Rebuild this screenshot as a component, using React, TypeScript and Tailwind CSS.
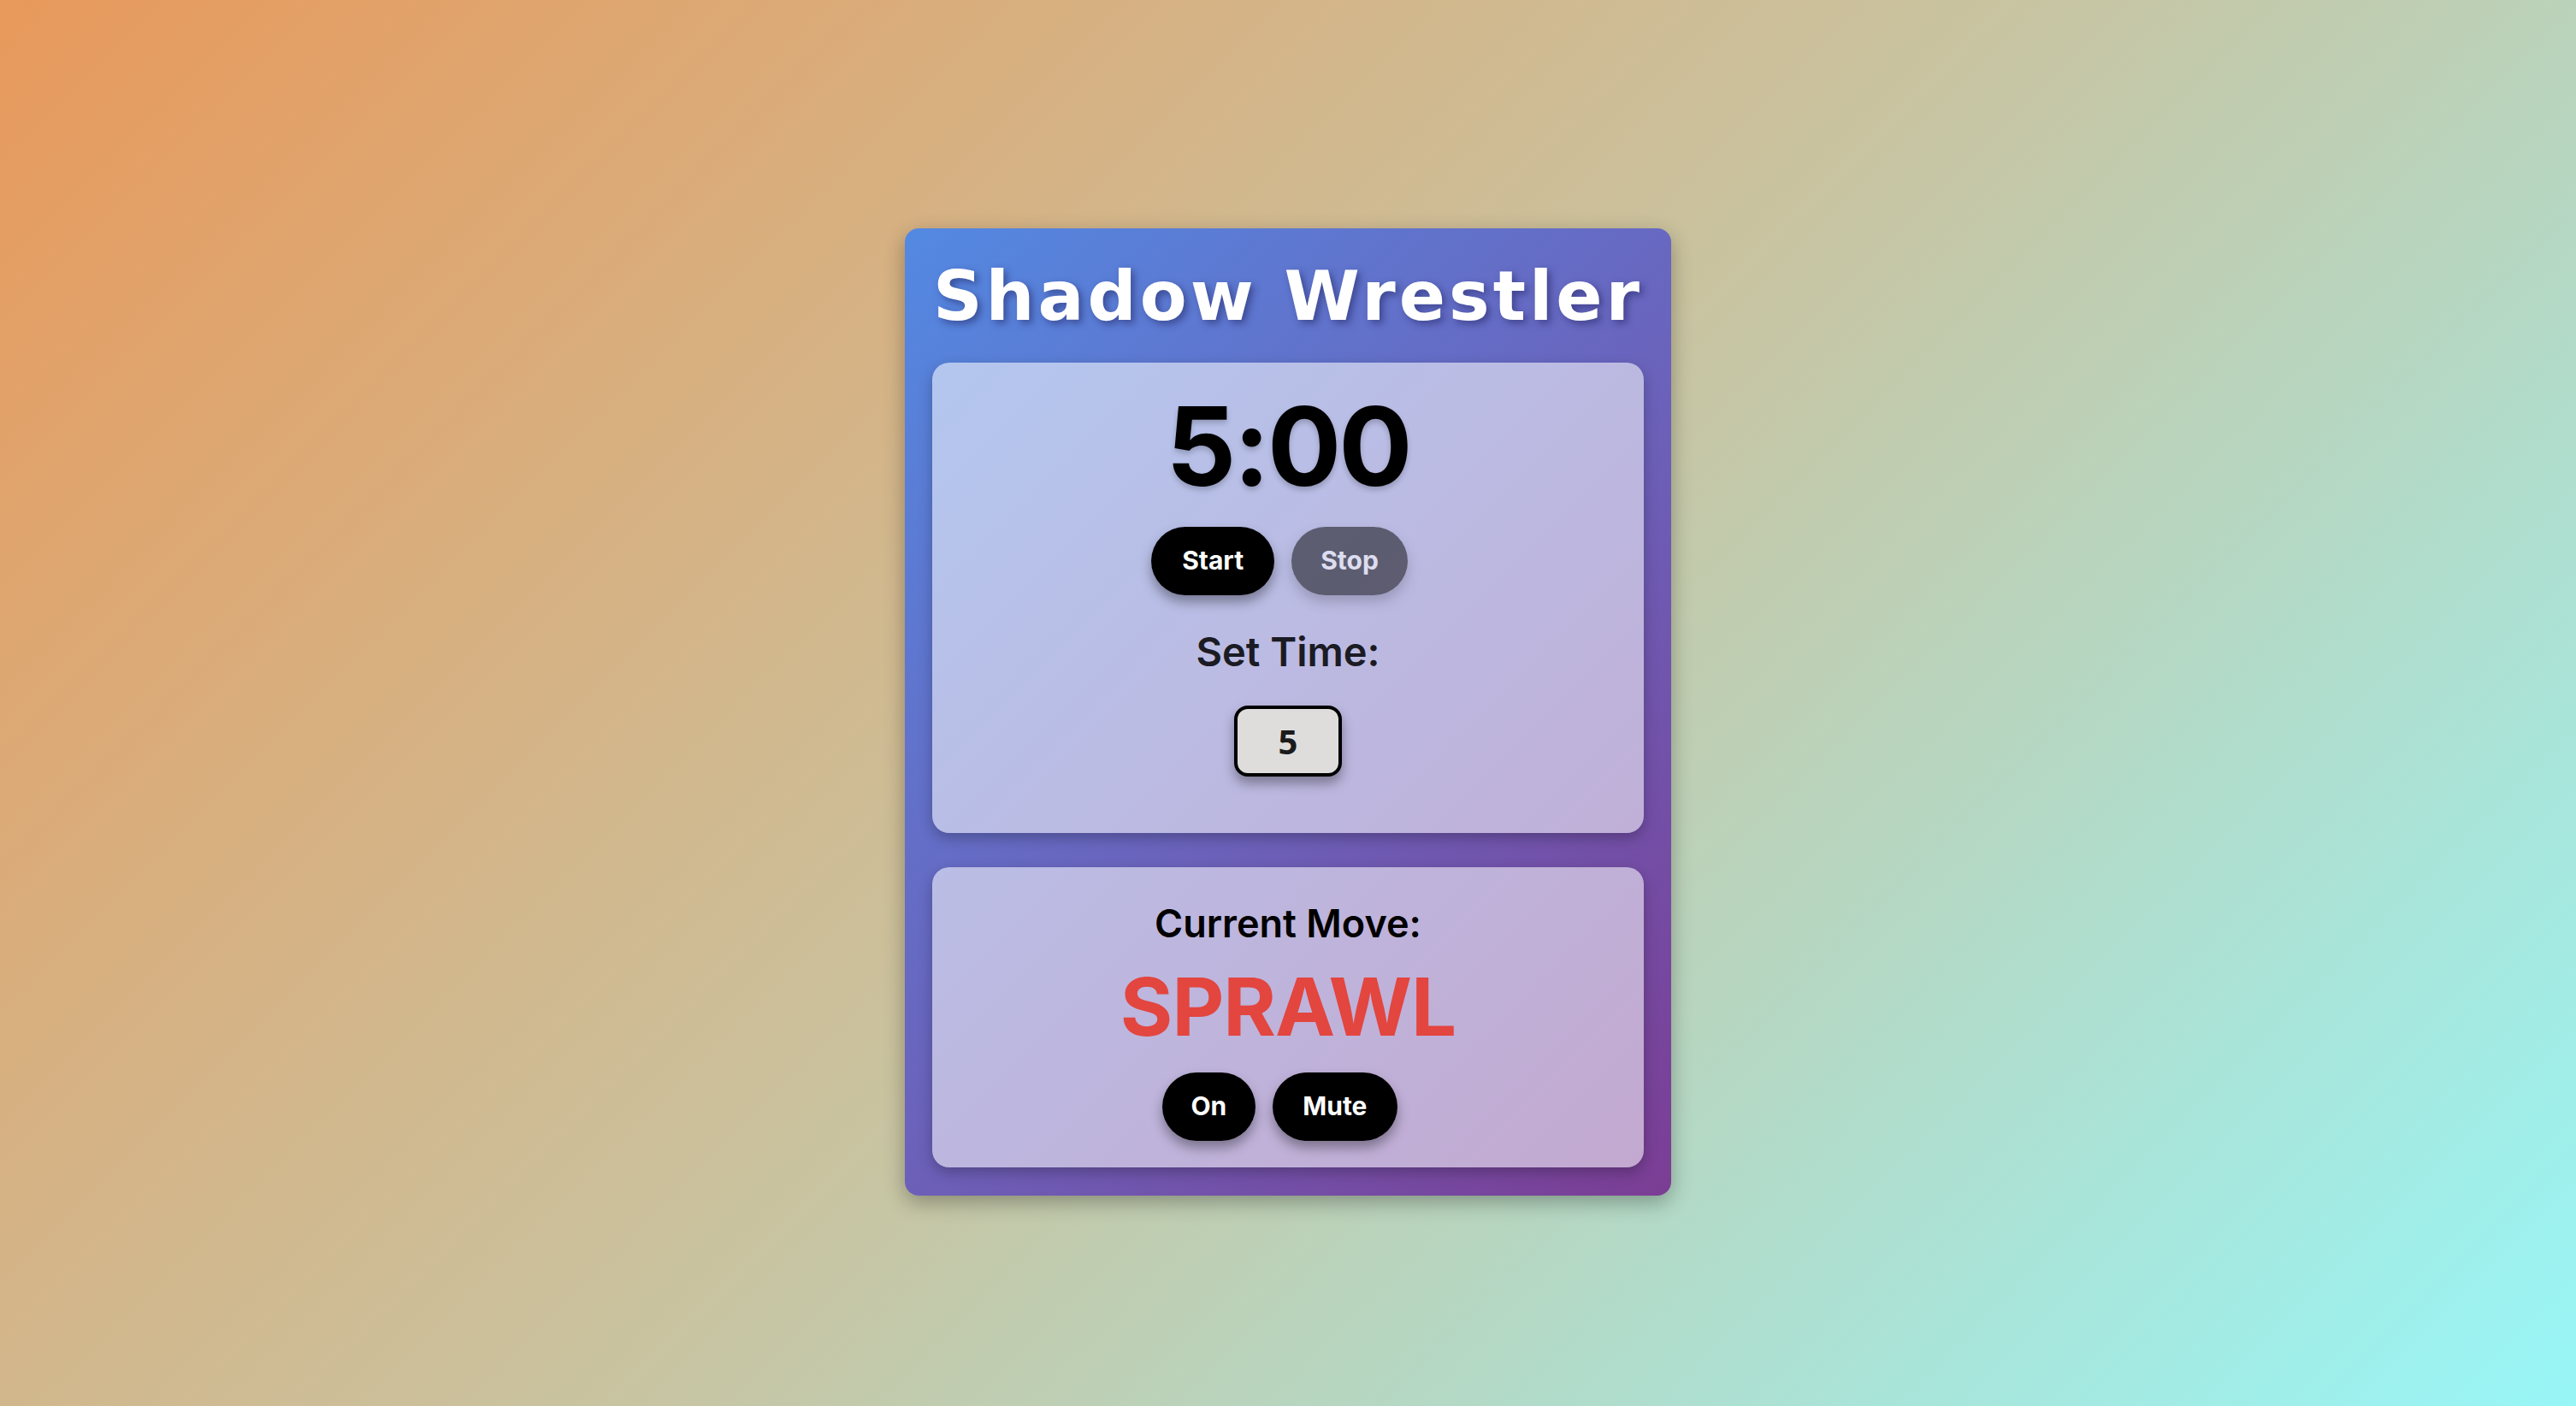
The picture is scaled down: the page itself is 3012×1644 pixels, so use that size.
export default function App() {
  return (
    <main className="min-h-screen w-full flex items-center justify-center pt-[20px] bg-[linear-gradient(135deg,#e8995b_0%,#c9c3a0_50%,#98f6f7_100%)] font-['Inter',sans-serif]">
      <div className="w-[896px] rounded-[16px] bg-[linear-gradient(135deg,#5389e2_0%,#6a64bd_50%,#7b3d94_100%)] px-[32px] pt-[32px] pb-[33px] shadow-[0_8px_24px_rgba(0,0,0,0.3)]">
        <h1 className="text-center text-white font-['DejaVu_Sans',sans-serif] font-bold text-[80px] leading-[96px] tracking-[4px] mb-[29px] [text-shadow:4px_4px_8px_rgba(30,30,90,0.5)]">
          Shadow Wrestler
        </h1>

        <section className="flex flex-col items-center rounded-[20px] bg-white/55 pt-[34px] pb-[66px] shadow-[0_6px_16px_rgba(0,0,0,0.25)]">
          <div className="text-[128px] leading-none font-bold text-black tracking-[-3px] [text-shadow:0_4px_6px_rgba(0,0,0,0.2)]">
            5:00
          </div>
          <div className="flex mt-[30px]">
            <button className="h-[80px] px-[36px] mr-[20px] rounded-full bg-black text-white text-[30px] font-bold shadow-[0_8px_14px_rgba(0,0,0,0.35)]">
              Start
            </button>
            <button
              disabled
              className="h-[80px] px-[34px] mr-[20px] rounded-full bg-black text-white text-[30px] font-bold opacity-50 shadow-[0_8px_14px_rgba(0,0,0,0.35)]"
            >
              Stop
            </button>
          </div>
          <h2 className="mt-[37px] text-[47px] leading-[58px] font-semibold text-[#1b1b24]">
            Set Time:
          </h2>
          <input
            type="text"
            defaultValue="5"
            className="mt-[34px] w-[126px] h-[83px] rounded-[16px] border-[4px] border-black bg-[#dedddb] text-center text-[40px] font-bold text-[#1b1b1b] font-['Noto_Sans',sans-serif] shadow-[0_8px_14px_rgba(0,0,0,0.35)] outline-none"
          />
        </section>

        <section className="mt-[40px] flex flex-col items-center rounded-[20px] bg-white/55 pt-[40px] pb-[31px] shadow-[0_6px_16px_rgba(0,0,0,0.25)]">
          <h2 className="text-[45px] leading-[52px] font-semibold text-black">
            Current Move:
          </h2>
          <div className="mt-[16px] text-[94px] leading-[110px] font-bold text-[#e3453f] tracking-[-1px]">
            SPRAWL
          </div>
          <div className="flex mt-[22px]">
            <button className="h-[80px] px-[34px] mr-[20px] rounded-full bg-black text-white text-[30px] font-bold shadow-[0_8px_14px_rgba(0,0,0,0.35)]">
              On
            </button>
            <button className="h-[80px] px-[35px] mr-[20px] rounded-full bg-black text-white text-[30px] font-bold shadow-[0_8px_14px_rgba(0,0,0,0.35)]">
              Mute
            </button>
          </div>
        </section>
      </div>
    </main>
  );
}
